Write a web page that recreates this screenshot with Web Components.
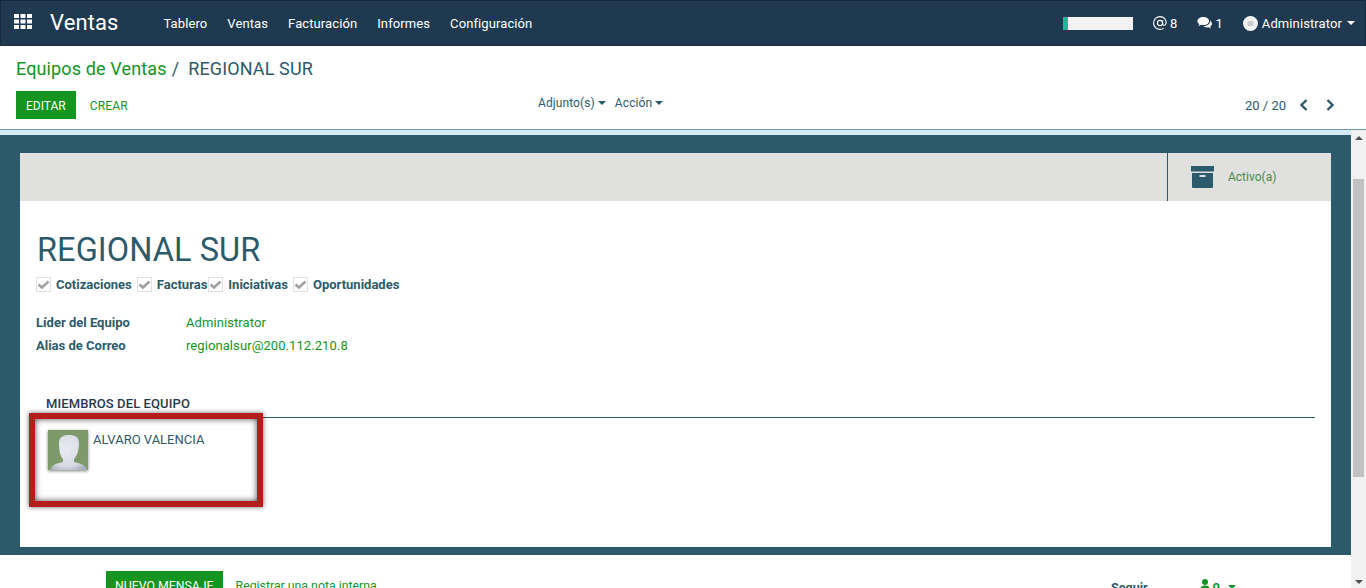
<!DOCTYPE html>
<html lang="es">
<head>
<meta charset="utf-8">
<title>Equipos de Ventas</title>
<style>
  html,body{margin:0;height:100%;overflow:hidden;background:#fff;font-family:Roboto,"Liberation Sans",sans-serif;font-size:13px;color:#2c5a6a}
  body{display:flex;flex-direction:column;height:588px}
</style>
</head>
<body>
<app-navbar></app-navbar>
<control-panel></control-panel>
<content-area>
  <team-sheet></team-sheet>
  <chatter-bar slot="footer"></chatter-bar>
</content-area>

<script>
const caret = `<span style="display:inline-block;width:0;height:0;border-left:4px solid transparent;border-right:4px solid transparent;border-top:4px solid currentColor;vertical-align:middle"></span>`

class AppNavbar extends HTMLElement{
  constructor(){
    super()
    this.attachShadow({mode:'open'}).innerHTML=`
    <style>
      :host{display:flex;align-items:center;flex:none;box-sizing:border-box;height:46px;background:#1f3a50;border:1px solid #14293a;color:#fff;padding:0 9px 0 13px}
      .apps{display:block;width:18px;height:15px;margin-bottom:3px}
      .brand{font-size:22px;margin:0 45px 0 18px;line-height:1;letter-spacing:.1px}
      nav{display:flex;gap:20px;font-size:13px;letter-spacing:.1px}
      .right{margin-left:auto;display:flex;align-items:center;font-size:13px;letter-spacing:.1px}
      .progress{width:70px;height:13px;background:#f2f2f2;border-left:5px solid #1fb89a;box-sizing:border-box;margin-right:20px}
      .item{display:flex;align-items:center;gap:3px}
      .chat{margin-left:20px;gap:2px}
      .user{margin-left:20px;gap:4px}
      .user svg{width:15px;height:15px}
      .user span{margin-right:1px}
    </style>
    <svg class="apps" viewBox="0 0 18 15" fill="#fff">
      <rect x="0" y="0" width="5" height="4"/><rect x="6.500" y="0" width="5" height="4"/><rect x="13" y="0" width="5" height="4"/>
      <rect x="0" y="5.500" width="5" height="4"/><rect x="6.500" y="5.500" width="5" height="4"/><rect x="13" y="5.500" width="5" height="4"/>
      <rect x="0" y="11" width="5" height="4"/><rect x="6.500" y="11" width="5" height="4"/><rect x="13" y="11" width="5" height="4"/>
    </svg>
    <div class="brand">Ventas</div>
    <nav><span>Tablero</span><span>Ventas</span><span>Facturación</span><span>Informes</span><span>Configuración</span></nav>
    <div class="right">
      <div class="progress"></div>
      <div class="item"><svg width="14" height="14" viewBox="0 0 14 14" fill="none" stroke="#fff" stroke-width="1.100"><circle cx="7" cy="7" r="2.600"/><path d="M9.600 4.400V8.200c0 1.500 2.900 1.600 3.400-.6C13.700 3.500 10.800.6 7 .6A6.400 6.400 0 0 0 7 13.400c1.500 0 2.700-.4 3.700-1"/></svg><span>8</span></div>
      <div class="item chat"><svg width="16" height="14" viewBox="0 0 16 14" fill="#fff"><path d="M6.300 1C3 1 .4 2.800.4 5c0 1.200.8 2.300 2 3.100-.2.700-.6 1.300-1.100 1.800 1-.1 2-.5 2.800-1.100.7.200 1.400.3 2.200.3 3.300 0 5.900-1.800 5.900-4.100S9.600 1 6.300 1z"/><path d="M13.200 4.200c.1.300.1.600.1.900 0 2.800-2.900 5-6.600 5h-.5c.9.900 2.300 1.400 3.900 1.400.5 0 1-.1 1.500-.2.700.6 1.500 1 2.400 1.100-.4-.5-.7-1-.9-1.600 1.100-.7 1.800-1.700 1.800-2.800 0-1.500-.7-2.800-1.700-3.800z"/></svg><span>1</span></div>
      <div class="item user"><svg viewBox="0 0 15 15"><circle cx="7.500" cy="7.500" r="7.500" fill="#f4f4f4"/><rect x="4.500" y="5" width="6" height="5" rx="1" fill="#cfcfcf"/></svg><span>Administrator</span>${caret}</div>
    </div>`
  }
}

class ControlPanel extends HTMLElement{
  constructor(){
    super()
    this.attachShadow({mode:'open'}).innerHTML=`
    <style>
      :host{display:block;flex:none;box-sizing:border-box;height:84px;padding:11px 31px 0 16px;border-bottom:1px solid #6f99a6;background:#fff;color:#2c5a6a}
      .crumbs{font-size:18px;line-height:24px;display:flex;letter-spacing:.13px}
      .crumbs a{color:#13951f}
      .crumbs .sep{margin:0 9px 0 5px;color:#2c5a6a}
      .row{display:grid;grid-template-columns:522px auto 1fr;align-items:center;margin-top:10px;height:28px}
      .left{display:flex;align-items:center;font-size:12px}
      .edit{background:#13951f;color:#fff;height:28px;line-height:30px;padding:0 10px}
      .create{color:#13951f;margin-left:14px;padding-top:1px;letter-spacing:.2px}
      .mid{display:flex;gap:9px;font-size:12px;margin-top:-4px;letter-spacing:.1px}
      .mid span{display:flex;align-items:center;gap:3px}
      .right{display:flex;align-items:center;justify-content:flex-end;font-size:13px}
      .right svg{width:9px;height:12px;display:block;margin-left:13px}
      .right svg + svg{margin-left:18px}
    </style>
    <div class="crumbs"><a>Equipos de Ventas</a><span class="sep">/</span><span>REGIONAL SUR</span></div>
    <div class="row">
      <div class="left"><span class="edit">EDITAR</span><span class="create">CREAR</span></div>
      <div class="mid"><span>Adjunto(s) ${caret}</span><span>Acción ${caret}</span></div>
      <div class="right"><span>20 / 20</span>
        <svg viewBox="0 0 9 12" fill="none" stroke="#2c5a6a" stroke-width="2.400"><path d="M7.500 1 2.500 6l5 5"/></svg>
        <svg viewBox="0 0 9 12" fill="none" stroke="#2c5a6a" stroke-width="2.400"><path d="M1.500 1l5 5-5 5"/></svg>
      </div>
    </div>`
  }
}

class ContentArea extends HTMLElement{
  constructor(){
    super()
    this.attachShadow({mode:'open'}).innerHTML=`
    <style>
      :host{display:grid;grid-template-columns:1fr 15px;flex:1;min-height:0;overflow:hidden}
      .main{min-width:0;overflow:hidden;display:flex;flex-direction:column}
      .strip{flex:none;height:5px;background:#d3edf6}
      .teal{flex:none;background:#2c5a6a;padding:18px 20px 8px}
      .bar{background:#f1f1f1;display:flex;flex-direction:column;align-items:center;justify-content:space-between;position:relative;padding:0 0 4px}
      .up,.down{width:0;height:0;border-left:4px solid transparent;border-right:4px solid transparent}
      .up{border-bottom:4px solid #505050;margin-top:6px}
      .down{border-top:4px solid #505050}
      .thumb{position:absolute;left:2px;right:2px;top:49px;height:298px;background:#c1c1c1}
    </style>
    <div class="main">
      <div class="strip"></div>
      <div class="teal"><slot></slot></div>
      <slot name="footer"></slot>
    </div>
    <div class="bar"><i class="up"></i><div class="thumb"></div><i class="down"></i></div>`
  }
}

class TeamMember extends HTMLElement{
  constructor(){
    super()
    this.attachShadow({mode:'open'}).innerHTML=`
    <style>
      :host{display:flex;gap:5px;color:#2c5a6a;font-size:13px}
      svg{width:40px;height:40px;box-shadow:0 1px 3px rgba(0,0,0,.5);display:block}
      span{line-height:16px;margin-top:2px}
    </style>
    <svg viewBox="0 0 40 40">
      <defs>
        <radialGradient id="face" cx=".45" cy=".4" r=".7"><stop offset="0" stop-color="#e8eaf0"/><stop offset=".7" stop-color="#d8dbe4"/><stop offset="1" stop-color="#aab0bc"/></radialGradient>
      </defs>
      <rect width="40" height="40" fill="#7f9a6a"/>
      <path d="M11 13C11 7 15 5 21 5s10 2 10 8c0 7-2 13-5 16v3c5 1.500 11 2 13 8H2c2-6 8-6.500 13-8v-3c-3-3-4-9-4-16z" fill="url(#face)"/>
    </svg>
    <span><slot></slot></span>`
  }
}
class TeamSheet extends HTMLElement{
  constructor(){
    super()
    this.attachShadow({mode:'open'}).innerHTML=`
    <style>
      :host{display:block;background:#fff;height:394px;position:relative;color:#2c5a6a;font-size:13px}
      .head{height:48px;background:#e0e0de;display:flex;justify-content:flex-end}
      .active{width:164px;border-left:1px solid #2c5a6a;display:flex;align-items:center;gap:14px;padding-left:23px;box-sizing:border-box;color:#4a8a50;font-size:12px}
      .active svg{width:23px;height:22px;display:block}
      .body{padding:31px 16px 0 16px}
      h1{font-weight:400;font-size:32.500px;line-height:36px;margin:0 0 6px 1px;letter-spacing:.07px}
      .checks{display:flex;height:21px;align-items:center;font-weight:700;font-size:13px}
      .check{display:flex;align-items:center;gap:5px;margin-right:5px}
      .box{width:15px;height:15px;box-sizing:border-box;border:1px solid #e0e0e0;display:block}
      .fields{display:grid;grid-template-columns:150px 1fr;grid-auto-rows:23px;align-items:center;margin-top:16px}
      .fields b{font-weight:700}
      .fields a{color:#13951f;letter-spacing:.08px}
      .tabs{margin-top:34px;border-bottom:1px solid #2c5a6a;height:26px;padding-left:10px;line-height:26px;color:#1f3a50;font-size:13px;font-weight:500;letter-spacing:.1px}
      team-member{margin:12px 0 0 12px}
      .mark{position:absolute;left:9px;top:260px;width:234px;height:94px;box-sizing:border-box;border:6px solid #b71c1c;box-shadow:0 0 5px rgba(0,0,0,.6),inset 0 0 6px rgba(0,0,0,.7)}
    </style>
    <div class="head"><div class="active">
      <svg viewBox="0 0 23 22" fill="#2c5a6a"><rect x="0" y="0" width="23" height="5.500"/><path d="M1 7h21v14a1 1 0 0 1-1 1H2a1 1 0 0 1-1-1z"/><rect x="8.500" y="9" width="6" height="2" fill="#d6e0e3"/></svg>
      <span>Activo(a)</span></div></div>
    <div class="body">
      <h1>REGIONAL SUR</h1>
      <div class="checks">
        <div class="check">${this.box()}<span>Cotizaciones</span></div>
        <div class="check">${this.box()}<span>Facturas</span></div>
        <div class="check" style="margin-left:-4px">${this.box()}<span>Iniciativas</span></div>
        <div class="check">${this.box()}<span>Oportunidades</span></div>
      </div>
      <div class="fields">
        <b>Líder del Equipo</b><a>Administrator</a>
        <b>Alias de Correo</b><a>regionalsur@200.112.210.8</a>
      </div>
      <div class="tabs">MIEMBROS DEL EQUIPO</div>
      <team-member>ALVARO VALENCIA</team-member>
    </div>
    <div class="mark"></div>`
  }
  box(){
    return `<svg class="box" viewBox="0 0 13 13" fill="none" stroke="#a0a0a0" stroke-width="2.500"><path d="M1.500 6.500 5 9.500 11.500 3.500"/></svg>`
  }
}

class ChatterBar extends HTMLElement{
  constructor(){
    super()
    this.attachShadow({mode:'open'}).innerHTML=`
    <style>
      :host{display:flex;align-items:flex-start;padding:16px 115px 0 106px;font-size:13px;background:#fff}
      .send{background:#13951f;color:#fff;height:30px;padding:8px 9px 0;box-sizing:border-box;font-size:12.300px}
      .note{color:#13951f;margin:8px 0 0 13px;font-size:12.300px}
      .right{margin-left:auto;display:flex;gap:52px;margin-top:9px}
      .follow{font-weight:700;color:#2c5a6a;font-size:12.500px}
      .count{display:flex;align-items:flex-start;gap:3px;color:#13951f;font-weight:700;line-height:15px}
      .count svg{margin-top:-1px}
      .count .arrow{display:flex;margin:5px 0 0 5px}
    </style>
    <span class="send">NUEVO MENSAJE</span>
    <span class="note">Registrar una nota interna</span>
    <div class="right">
      <span class="follow">Seguir</span>
      <span class="count"><svg width="10" height="12" viewBox="0 0 10 12" fill="#13951f"><circle cx="5" cy="3" r="3"/><path d="M0 11c0-3 2-4.500 5-4.500s5 1.500 5 4.500z"/></svg><span>0</span><span class="arrow">${caret}</span></span>
    </div>`
  }
}

customElements.define('app-navbar',AppNavbar)
customElements.define('control-panel',ControlPanel)
customElements.define('content-area',ContentArea)
customElements.define('team-member',TeamMember)
customElements.define('team-sheet',TeamSheet)
customElements.define('chatter-bar',ChatterBar)
</script>
</body>
</html>
